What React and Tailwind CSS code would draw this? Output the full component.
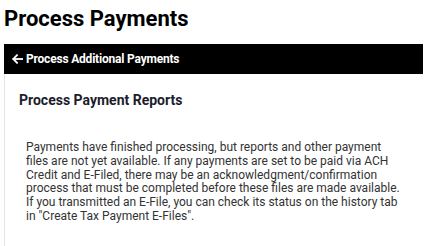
export default function App() {
  return (
    <div className="bg-white w-[432px] h-[246px] overflow-hidden font-['Roboto',sans-serif] px-1">
      <h1 className="text-[22px] font-bold text-black leading-[28px] pt-[5px] mb-[11px]">
        Process Payments
      </h1>
      <div className="w-[419px]">
        <div className="bg-black text-white h-[30px] flex items-center pl-[8px] text-[12px] font-bold tracking-[-0.2px]">
          <svg width="11" height="10" viewBox="0 0 11 10" className="mr-[3px]" fill="none" stroke="currentColor" strokeWidth="1.8" strokeLinecap="square">
            <path d="M10.5 5H1.5" />
            <path d="M5 1.2L1.3 5L5 8.8" />
          </svg>
          Process Additional Payments
        </div>
        <div className="border-l border-[#e5e5e5] h-[200px] pl-[14px] pt-[17px]">
          <h2 className="text-[14px] font-bold text-[#1c1c2c] leading-[18px]">
            Process Payment Reports
          </h2>
          <p className="text-[12px] text-[#333] leading-[13.8px] mt-[32px] pl-[7px] w-[400px] whitespace-nowrap">
            Payments have finished processing, but reports and other payment
            <br />
            files are not yet available. If any payments are set to be paid via ACH
            <br />
            Credit and E-Filed, there may be an acknowledgment/confirmation
            <br />
            process that must be completed before these files are made available.
            <br />
            If you transmitted an E-File, you can check its status on the history tab
            <br />
            in "Create Tax Payment E-Files".
          </p>
        </div>
      </div>
    </div>
  );
}
